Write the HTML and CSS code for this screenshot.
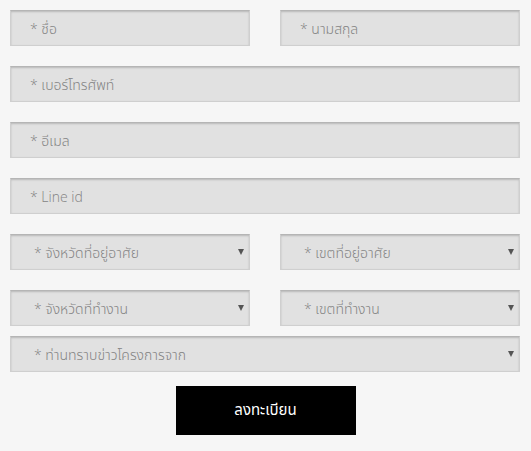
FILE: index.html
```html
<!DOCTYPE html>
<html lang="th">
<head>
<meta charset="utf-8">
<link rel="stylesheet" href="styles.css">
</head>
<body>
<form class="form">
  <div class="row two">
    <input class="field" type="text" placeholder="* ชื่อ">
    <input class="field" type="text" placeholder="* นามสกุล">
  </div>
  <div class="row">
    <input class="field" type="text" placeholder="* เบอร์โทรศัพท์">
  </div>
  <div class="row">
    <input class="field" type="text" placeholder="* อีเมล">
  </div>
  <div class="row">
    <input class="field" type="text" placeholder="* Line id">
  </div>
  <div class="row two">
    <div class="select-wrap">
      <select class="field select"><option>* จังหวัดที่อยู่อาศัย</option></select>
      <span class="arrow"></span>
    </div>
    <div class="select-wrap">
      <select class="field select"><option>* เขตที่อยู่อาศัย</option></select>
      <span class="arrow"></span>
    </div>
  </div>
  <div class="row two close">
    <div class="select-wrap">
      <select class="field select"><option>* จังหวัดที่ทำงาน</option></select>
      <span class="arrow"></span>
    </div>
    <div class="select-wrap">
      <select class="field select"><option>* เขตที่ทำงาน</option></select>
      <span class="arrow"></span>
    </div>
  </div>
  <div class="row tight">
    <div class="select-wrap">
      <select class="field select"><option>* ท่านทราบข่าวโครงการจาก</option></select>
      <span class="arrow"></span>
    </div>
  </div>
  <div class="actions">
    <button class="submit" type="button">ลงทะเบียน</button>
  </div>
</form>
</body>
</html>
```

FILE: styles.css
```css
html, body {
  margin: 0;
  padding: 0;
  background: #f6f6f6;
}
body {
  font-family: "Open Sans", "Noto Sans Thai", sans-serif;
}
.form {
  display: flex;
  flex-direction: column;
  padding: 10px 11px 0 10px;
}
.row {
  display: grid;
  grid-template-columns: 1fr;
  margin-bottom: 20px;
}
.row.two {
  grid-template-columns: 240px 240px;
  column-gap: 30px;
}
.row.close {
  margin-bottom: 10px;
}
.row.tight {
  margin-bottom: 14px;
}
.field {
  box-sizing: border-box;
  width: 100%;
  height: 36px;
  margin: 0;
  border: 1px solid #cfcfcf;
  border-top-color: #b5b5b5;
  background: #e1e1e1;
  box-shadow: inset 0 1px 2px rgba(0, 0, 0, 0.18);
  font-family: "Open Sans", "Noto Sans Thai", sans-serif;
  font-weight: 300;
  font-style: normal;
  font-size: 14px;
  color: #848484;
  padding: 0 0 0 19px;
  outline: none;
  border-radius: 0;
}
.field::placeholder {
  color: #848484;
  font-style: normal;
  opacity: 1;
}
.select-wrap {
  position: relative;
}
.select {
  appearance: none;
  -webkit-appearance: none;
  padding-left: 23px;
}
.arrow {
  position: absolute;
  right: 6px;
  top: 15px;
  width: 0;
  height: 0;
  border-left: 3px solid transparent;
  border-right: 3px solid transparent;
  border-top: 6px solid #555;
}
.actions {
  display: flex;
  justify-content: center;
}
.submit {
  width: 180px;
  height: 49px;
  margin-left: 1px;
  background: #000;
  color: #fff;
  border: none;
  font-family: "Open Sans", "Noto Sans Thai", sans-serif;
  font-weight: 400;
  font-size: 15px;
}
```
